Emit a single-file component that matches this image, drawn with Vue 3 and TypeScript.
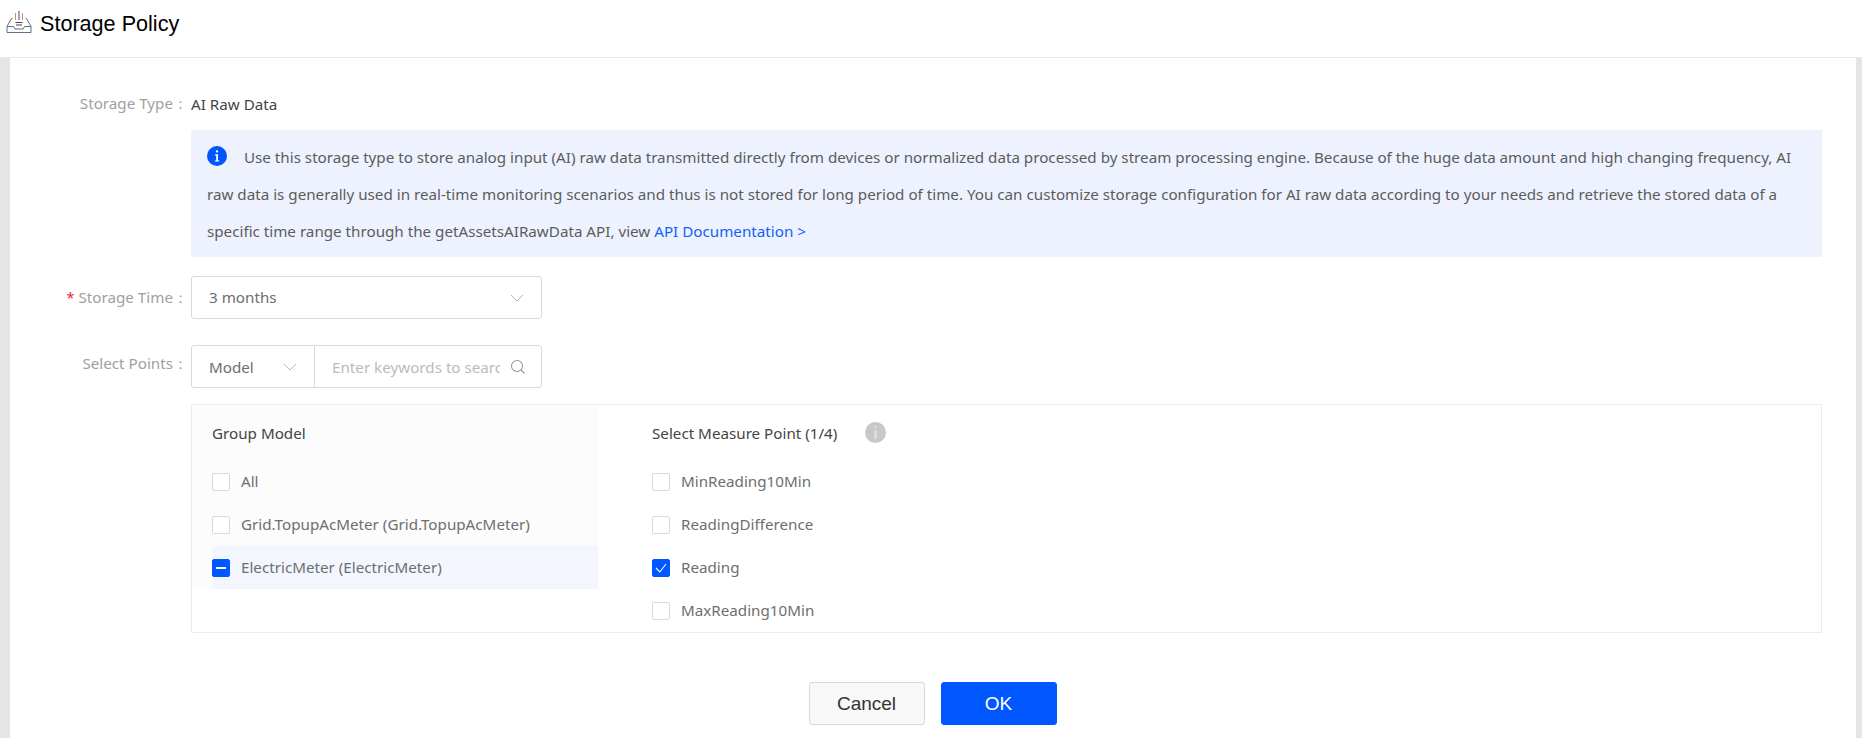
<template>
  <div class="page">
    <header class="page-header">
      <svg class="header-icon" viewBox="0 0 26 24" fill="none">
        <path d="M6.5 8.5 H5.5 L1 16.5 V22.5 H25 V16.5 L20.5 8.5 H19.5" stroke="#5f6f86" stroke-width="1" />
        <path d="M1 16.5 H7.5 L9 19 H17 L18.5 16.5 H25" stroke="#5f6f86" stroke-width="1" />
        <path d="M9.5 12.5 H16.5 M10 15 H16" stroke="#444" stroke-width="1" />
        <path d="M9.5 3 V10 M16.5 3 V10" stroke="#c9905a" stroke-width="1" />
        <path d="M13 1 V10" stroke="#7a3fa0" stroke-width="1.1" />
      </svg>
      <span class="header-title">Storage Policy</span>
    </header>

    <main class="content">
      <div class="form">
        <div class="form-row type-row">
          <label class="form-label">Storage Type：</label>
          <span class="type-value">AI Raw Data</span>
        </div>

        <div class="alert">
          <svg class="alert-icon" viewBox="0 0 20 20">
            <circle cx="10" cy="10" r="10" fill="#0056ff" />
            <rect x="8.9" y="4.2" width="2.2" height="2.2" rx="1" fill="#fff" />
            <path d="M8 8.2 H11 V14.4 H12.2 V15.6 H8 V14.4 H9.2 V9.4 H8 Z" fill="#fff" />
          </svg>
          Use this storage type to store analog input (AI) raw data transmitted directly from devices or normalized data processed by stream processing engine. Because of the huge data amount and high changing frequency, AI raw data is generally used in real-time monitoring scenarios and thus is not stored for long period of time. You can customize storage configuration for AI raw data according to your needs and retrieve the stored data of a specific time range through the getAssetsAIRawData API, view
          <a class="alert-link">API Documentation &gt;</a>
        </div>

        <div class="form-row time-row">
          <label class="form-label"><span class="required">*</span> Storage Time：</label>
          <div class="select-box">
            <span class="select-text">3 months</span>
            <svg class="chevron" viewBox="0 0 14 8" fill="none"><path d="M1 1 L7 7 L13 1" stroke="#b5b5b5" stroke-width="1" /></svg>
          </div>
        </div>

        <div class="form-row points-row">
          <label class="form-label">Select Points：</label>
          <div class="search-group">
            <div class="search-type">
              <span>Model</span>
              <svg class="chevron" viewBox="0 0 14 8" fill="none"><path d="M1 1 L7 7 L13 1" stroke="#b5b5b5" stroke-width="1" /></svg>
            </div>
            <div class="search-input">
              <span class="placeholder">Enter keywords to search</span>
              <svg class="search-icon" viewBox="0 0 16 16" fill="none">
                <circle cx="7" cy="7" r="5.5" stroke="#999" stroke-width="1.1" />
                <path d="M11 11 L14.5 14.5" stroke="#999" stroke-width="1.1" />
              </svg>
            </div>
          </div>
        </div>

        <div class="picker">
          <div class="group-col">
            <div class="col-title">Group Model</div>
            <div
              v-for="group in groups"
              :key="group.name"
              class="check-row"
              :class="{ active: group.state === 'partial' }"
            >
              <span class="checkbox" :class="{ on: group.state === 'partial' }">
                <span v-if="group.state === 'partial'" class="dash"></span>
              </span>
              <span class="check-text">{{ group.name }}</span>
            </div>
          </div>
          <div class="point-col">
            <div class="col-title">
              Select Measure Point (1/4)
              <svg class="title-info" viewBox="0 0 20 20">
                <circle cx="10" cy="10" r="10" fill="#c8c8c8" />
                <rect x="9" y="4" width="2" height="2" fill="#e4e4e4" />
                <rect x="9" y="8" width="2" height="8" fill="#e4e4e4" />
              </svg>
            </div>
            <div v-for="point in points" :key="point.name" class="check-row">
              <span class="checkbox" :class="{ on: point.checked }">
                <svg v-if="point.checked" viewBox="0 0 18 18" fill="none">
                  <path d="M4 9 L7.8 13 L14 5" stroke="#fff" stroke-width="1.1" />
                </svg>
              </span>
              <span class="check-text">{{ point.name }}</span>
            </div>
          </div>
        </div>
      </div>

      <div class="actions">
        <button class="btn btn-cancel">Cancel</button>
        <button class="btn btn-ok">OK</button>
      </div>
    </main>
  </div>
</template>

<script setup lang="ts">
interface Group {
  name: string
  state: 'none' | 'partial'
}

interface Point {
  name: string
  checked: boolean
}

const groups: Group[] = [
  { name: 'All', state: 'none' },
  { name: 'Grid.TopupAcMeter (Grid.TopupAcMeter)', state: 'none' },
  { name: 'ElectricMeter (ElectricMeter)', state: 'partial' },
]

const points: Point[] = [
  { name: 'MinReading10Min', checked: false },
  { name: 'ReadingDifference', checked: false },
  { name: 'Reading', checked: true },
  { name: 'MaxReading10Min', checked: false },
]
</script>

<style>
html,
body {
  margin: 0;
  background: #e5e5e5;
  overflow: hidden;
}
</style>

<style scoped>
.page {
  height: 738px;
  display: flex;
  flex-direction: column;
  font-family: 'Noto Sans', 'Liberation Sans', sans-serif;
  font-size: 15.2px;
  color: #6e6e6e;
}

.page-header {
  height: 58px;
  flex: none;
  display: flex;
  align-items: center;
  padding-left: 6px;
  padding-bottom: 9px;
  box-sizing: border-box;
  background: #fff;
  border-bottom: 1px solid #e8e8e8;
}

.header-icon {
  width: 26px;
  height: 24px;
  margin-right: 8px;
  margin-bottom: 4px;
}

.header-title {
  font-family: 'Liberation Sans', Arial, sans-serif;
  font-size: 21.6px;
  color: #000;
}

.content {
  flex: 1;
  margin: 0 6px 0 10px;
  background: #fff;
  padding-top: 36px;
}

.form {
  padding: 0 34px 0 181px;
}

.form-row {
  display: flex;
  align-items: center;
  position: relative;
}

.form-label {
  position: absolute;
  right: 100%;
  padding-right: 3px;
  white-space: nowrap;
  color: #a0a0a0;
}

.required {
  color: #f5222d;
}

.type-row {
  height: 20px;
}

.type-value {
  color: #444;
}

.alert {
  margin-top: 16px;
  height: 127px;
  box-sizing: border-box;
  padding: 9px 16px 0;
  background: #eef2fe;
  line-height: 37px;
  color: #5c5c5c;
}

.alert-icon {
  width: 20px;
  height: 20px;
  vertical-align: -3px;
  margin-right: 13px;
}

.alert-link {
  color: #0f62fe;
}

.time-row {
  margin-top: 19px;
}

.points-row {
  margin-top: 26px;
}

.points-row .form-label {
  padding-bottom: 5px;
}

.select-box,
.search-group {
  width: 351px;
  height: 43px;
  box-sizing: border-box;
  border: 1px solid #d9d9d9;
  border-radius: 3px;
  display: flex;
  align-items: center;
}

.select-box {
  justify-content: space-between;
  padding: 0 17px;
}

.select-text {
  padding-bottom: 2px;
}

.chevron {
  width: 14px;
  height: 8px;
}

.search-type {
  width: 123px;
  height: 100%;
  flex: none;
  box-sizing: border-box;
  padding: 0 17px;
  border-right: 1px solid #d9d9d9;
  display: flex;
  align-items: center;
  justify-content: space-between;
}

.search-input {
  flex: 1;
  min-width: 0;
  display: flex;
  align-items: center;
  padding: 0 15px 0 17px;
}

.placeholder {
  flex: 1;
  min-width: 0;
  overflow: hidden;
  white-space: nowrap;
  color: #bbb;
  margin-right: 10px;
}

.search-icon {
  width: 16px;
  height: 16px;
  flex: none;
}

.picker {
  margin-top: 16px;
  height: 229px;
  box-sizing: border-box;
  border: 1px solid #ececec;
  display: flex;
  align-items: flex-start;
}

.group-col {
  width: 406px;
  flex: none;
  box-sizing: border-box;
  padding-left: 20px;
  background: #fcfcfc;
}

.point-col {
  padding-left: 54px;
  flex: 1;
}

.col-title {
  height: 55px;
  display: flex;
  align-items: center;
  color: #444;
}

.title-info {
  width: 21px;
  height: 21px;
  margin-left: 28px;
}

.check-row {
  height: 43px;
  display: flex;
  align-items: center;
  gap: 11px;
}

.check-row.active {
  background: #f3f6fe;
}

.check-text {
  padding-bottom: 2px;
}

.checkbox {
  width: 18px;
  height: 18px;
  box-sizing: border-box;
  flex: none;
  border: 1px solid #d9d9d9;
  border-radius: 2px;
  background: #fff;
  display: flex;
  align-items: center;
  justify-content: center;
}

.checkbox svg {
  width: 18px;
  height: 18px;
  flex: none;
}

.checkbox.on {
  background: #0056ff;
  border-color: #0056ff;
}

.dash {
  width: 10px;
  height: 2px;
  background: #fff;
}

.actions {
  margin-top: 49px;
  display: flex;
  justify-content: center;
  gap: 16px;
  padding-right: 1px;
}

.btn {
  width: 116px;
  height: 43px;
  box-sizing: border-box;
  border-radius: 3px;
  font-family: 'Liberation Sans', Arial, sans-serif;
  font-size: 19px;
  cursor: pointer;
}

.btn-cancel {
  background: #f8f8f8;
  border: 1px solid #d9d9d9;
  color: #333;
}

.btn-ok {
  background: #0056ff;
  border: 1px solid #0056ff;
  color: #fff;
}
</style>
